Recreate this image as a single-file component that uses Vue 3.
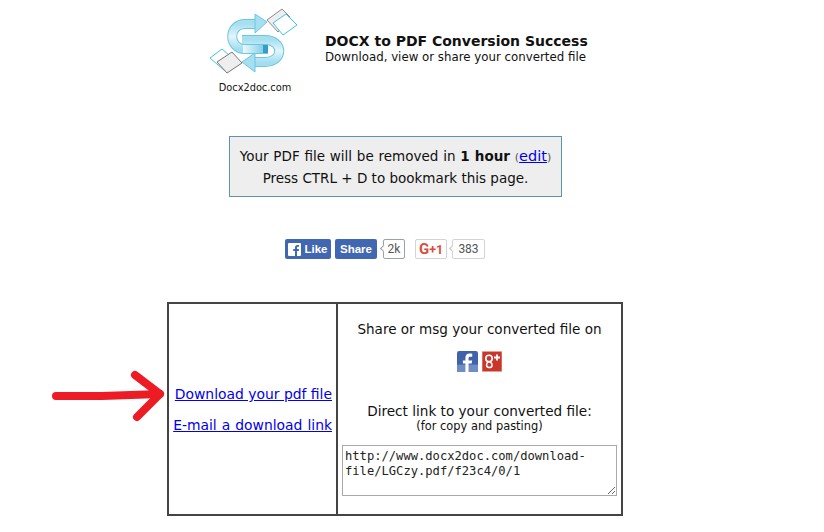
<template>
  <div class="page">
    <svg class="red-arrow" width="120" height="60" viewBox="0 0 120 60">
      <path d="M4 28 L50 28 L108 26" fill="none" stroke="#ed1c24" stroke-width="8" stroke-linecap="round" />
      <path d="M83 7 L108 26 L85 49" fill="none" stroke="#ed1c24" stroke-width="8" stroke-linecap="round" stroke-linejoin="round" />
    </svg>

    <div class="header">
      <div class="logo">
        <svg width="96" height="81" viewBox="0 -5 96 81">
          <defs>
            <linearGradient id="armBlue" x1="0" y1="0" x2="0" y2="1">
              <stop offset="0" stop-color="#a6e0f0" />
              <stop offset="0.5" stop-color="#e2f5fa" />
              <stop offset="1" stop-color="#a3def0" />
            </linearGradient>
            <linearGradient id="barBlue" x1="0" y1="0" x2="1" y2="0">
              <stop offset="0" stop-color="#eef9fc" />
              <stop offset="1" stop-color="#6cc6e0" />
            </linearGradient>
          </defs>
          <path d="M35 30 H58 C77 30 77 52 58 52 H46" fill="none" stroke="#6cc6e0" stroke-width="10" />
          <path d="M35 30 H58 C77 30 77 52 58 52 H46" fill="none" stroke="url(#armBlue)" stroke-width="8" />
          <path d="M48 43 L35 52 L48 62 Z" fill="#a6e0f0" stroke="#6cc6e0" stroke-linejoin="round" />
          <path d="M50 14 H38 C21 14 21 39 38 39 H61" fill="none" stroke="#6cc6e0" stroke-width="10" />
          <path d="M50 14 H38 C21 14 21 39 38 39 H61" fill="none" stroke="url(#armBlue)" stroke-width="8" />
          <rect x="36" y="35" width="25" height="8" fill="url(#barBlue)" />
          <rect x="56" y="35" width="5" height="8" fill="#2f9fc9" />
          <path d="M48 4 L60 12 L48 23 Z" fill="#a6e0f0" stroke="#6cc6e0" stroke-linejoin="round" />
          <path d="M60 10 L75 -1 L83 7 L71 22 Z" fill="#eee" stroke="#8a8a8a" />
          <path d="M66 13 L79 4 L90 15 L76 25 Z" fill="#fff" stroke="#3fc4e2" />
          <path d="M3 48 L15 39 L30 52 L18 61 Z" fill="#fff" stroke="#3fc4e2" />
          <path d="M10 52 L25 42 L35 53 L20 63 Z" fill="#eee" stroke="#777" />
        </svg>
        <div class="logo-name">Docx2doc.com</div>
      </div>
      <div class="title-block">
        <div class="title">DOCX to PDF Conversion Success</div>
        <div class="subtitle">Download, view or share your converted file</div>
      </div>
    </div>

    <div class="notice">
      <div class="notice-first">Your PDF file will be removed in <strong>1 hour</strong> <span class="edit">(<a href="#">edit</a>)</span></div>
      <div>Press CTRL + D to bookmark this page.</div>
    </div>

    <div class="social">
      <div class="fb-btn like">
        <svg width="13" height="13" viewBox="0 0 13 13">
          <rect width="13" height="13" rx="1" fill="#fff" />
          <path d="M9 13 V8 H10.8 L11 6 H9 V4.8 C9 4.2 9.2 3.8 10 3.8 H11 V2 C10.6 2 10 1.9 9.4 1.9 C7.9 1.9 7 2.8 7 4.4 V6 H5.2 V8 H7 V13 Z" fill="#4267b2" />
        </svg>
        <span>Like</span>
      </div>
      <div class="fb-btn share">Share</div>
      <div class="bubble fb-count">2k</div>
      <div class="gplus-btn"><span class="g">G</span><span class="plus">+1</span></div>
      <div class="bubble g-count">383</div>
    </div>

    <div class="panel">
      <div class="links">
        <a href="#">Download your pdf file</a>
        <a href="#" class="mail-link">E-mail a download link</a>
      </div>
      <div class="share-cell">
        <div class="share-title">Share or msg your converted file on</div>
        <div class="share-icons">
          <svg width="21" height="21" viewBox="0 0 20 20">
            <rect width="20" height="20" rx="2" fill="#3f62a8" />
            <rect y="13" width="20" height="7" fill="#6f8cc4" />
            <path d="M11 20 V12 H14 L14.4 9 H11 V7 C11 6 11.4 5.4 12.6 5.4 H14.5 V2.6 C14 2.5 13 2.4 12 2.4 C9.6 2.4 8 3.8 8 6.4 V9 H5.6 V12 H8 V20 Z" fill="#fff" />
          </svg>
          <svg width="20" height="21" viewBox="0 0 20 20">
            <rect width="20" height="20" rx="1" fill="#c8372b" stroke="#e3a08c" />
            <circle cx="7" cy="7" r="3.2" fill="none" stroke="#fff" stroke-width="1.6" />
            <path d="M7 10 C4 11 3.5 15.5 7 16 C11 16 11 12 8 10.5 Z" fill="none" stroke="#fff" stroke-width="1.5" />
            <path d="M12 6 H18 M15 3 V9" stroke="#fff" stroke-width="1.8" />
          </svg>
        </div>
        <div class="direct-title">Direct link to your converted file:</div>
        <div class="direct-note">(for copy and pasting)</div>
        <textarea class="link-box" readonly>http://www.docx2doc.com/download-file/LGCzy.pdf/f23c4/0/1</textarea>
      </div>
    </div>
  </div>
</template>

<script setup>
</script>

<style scoped>
.page {
  position: relative;
  width: 824px;
  height: 532px;
  overflow: hidden;
  background: #fff;
  color: #111;
  font-family: "DejaVu Sans", Verdana, sans-serif;
  font-size: 13px;
}

.red-arrow {
  position: absolute;
  left: 52px;
  top: 368px;
}

.header {
  display: flex;
  padding: 5px 0 0 207px;
  height: 136px;
  box-sizing: border-box;
}

.logo {
  width: 96px;
  text-align: center;
}

.logo svg {
  display: block;
}

.logo-name {
  margin-top: -5px;
  font-size: 9.8px;
  line-height: 14px;
}

.title-block {
  margin: 28px 0 0 22px;
}

.title {
  font-size: 14px;
  font-weight: bold;
  line-height: 16px;
}

.subtitle {
  font-size: 11.8px;
  line-height: 16px;
}

.notice {
  width: 333px;
  height: 61px;
  box-sizing: border-box;
  margin-left: 229px;
  padding-top: 9px;
  background: #eee;
  border: 1px solid #5e93aa;
  text-align: center;
  line-height: 21px;
  font-size: 13.5px;
}

.notice-first {
  word-spacing: 0.5px;
}

.edit {
  color: #555;
  font-size: 11px;
}

.edit a {
  color: #00e;
  font-size: 14.5px;
}

.social {
  display: flex;
  align-items: center;
  height: 22px;
  margin: 41px 0 0 285px;
}

.fb-btn {
  display: flex;
  align-items: center;
  justify-content: center;
  gap: 3px;
  height: 20px;
  box-sizing: border-box;
  background: #4267b2;
  border-radius: 2px;
  color: #fff;
  font-family: "Liberation Sans", sans-serif;
  font-size: 11.5px;
  font-weight: bold;
}

.like {
  width: 46px;
}

.share {
  width: 42px;
  margin-left: 4px;
}

.bubble {
  position: relative;
  height: 20px;
  box-sizing: border-box;
  border: 1px solid #c6c6c6;
  border-radius: 2px;
  color: #555;
  font-family: Roboto, "Liberation Sans", sans-serif;
  font-size: 12px;
  line-height: 18px;
  text-align: center;
}

.bubble::before {
  content: "";
  position: absolute;
  left: -3px;
  top: 6px;
  width: 4px;
  height: 4px;
  background: #fff;
  border-left: 1px solid #c6c6c6;
  border-bottom: 1px solid #c6c6c6;
  transform: rotate(45deg);
}

.fb-count {
  width: 22px;
  margin-left: 6px;
  border-color: #9aa0ac;
}

.fb-count::before {
  border-color: #9aa0ac;
}

.gplus-btn {
  display: flex;
  align-items: center;
  justify-content: center;
  width: 32px;
  height: 20px;
  margin-left: 10px;
  box-sizing: border-box;
  border: 1px solid #d4d4d4;
  border-radius: 2px;
  color: #dd4b39;
  font-family: Roboto, "Liberation Sans", sans-serif;
  font-size: 12.5px;
  font-weight: bold;
}

.g {
  font-size: 15px;
}

.g-count {
  width: 33px;
  margin-left: 5px;
  border-color: #d4d4d4;
}

.panel {
  display: flex;
  width: 456px;
  height: 214px;
  box-sizing: border-box;
  margin: 42px 0 0 167px;
  border: 2px solid #444;
}

.links {
  display: flex;
  flex-direction: column;
  justify-content: center;
  gap: 15px;
  width: 169px;
  box-sizing: border-box;
  padding: 1px 4px 0 0;
  border-right: 2px solid #444;
  text-align: right;
  font-size: 13.9px;
}

.links a {
  color: #00e;
}

.mail-link {
  word-spacing: 0.6px;
}

.share-cell {
  flex: 1;
  text-align: center;
}

.share-title {
  margin-top: 17px;
  font-size: 13.55px;
  line-height: 16px;
}

.share-icons {
  display: flex;
  justify-content: center;
  gap: 4px;
  margin-top: 14px;
  height: 22px;
}

.direct-title {
  margin-top: 30px;
  font-size: 13.6px;
  line-height: 17px;
}

.direct-note {
  font-size: 11.4px;
  line-height: 13px;
}

.link-box {
  display: block;
  width: 275px;
  height: 51px;
  box-sizing: border-box;
  margin: 12px 0 0 4px;
  padding: 3px 2px 2px;
  border: 1px solid #a9a9a9;
  color: #222;
  font-family: "DejaVu Sans Mono", monospace;
  font-size: 12.13px;
  line-height: 15px;
}
</style>
